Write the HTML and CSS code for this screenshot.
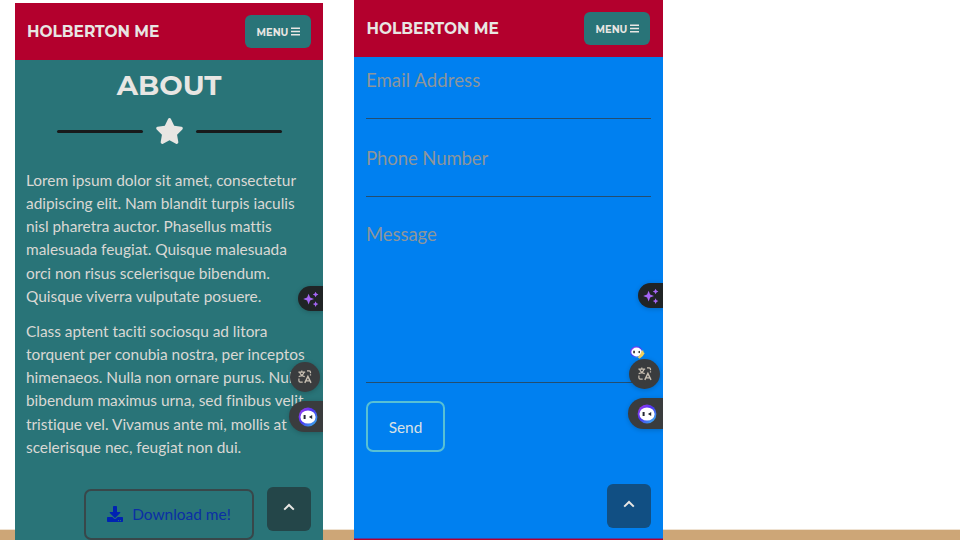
FILE: index.html
```html
<!DOCTYPE html>
<html lang="en">
<head>
<meta charset="utf-8">
<title>Holberton Me</title>
<link rel="stylesheet" href="styles.css">
</head>
<body>
<svg class="defs" width="0" height="0">
  <defs>
    <linearGradient id="ring" x1="0" y1="0" x2="1" y2="1"><stop offset="0" stop-color="#b03cf0"/><stop offset=".45" stop-color="#4b35f4"/><stop offset="1" stop-color="#35c4ea"/></linearGradient>
    <symbol id="sparkles" viewBox="0 0 16 16"><path fill="#a566f5" d="M5.6 2.8 7.1 6.6 11 8.1 7.1 9.6 5.6 13.5 4.1 9.6.2 8.1 4.1 6.6ZM12.6.7l.9 1.9 1.9.9-1.9.9-.9 1.9-.9-1.9-1.9-.9 1.9-.9ZM12.6 10.3l.9 1.9 1.9.9-1.9.9-.9 1.9-.9-1.9-1.9-.9 1.9-.9Z"/></symbol>
    <symbol id="translate" viewBox="0 0 14 14"><g fill="none" stroke="#c9c0b3" stroke-width="1.2"><path d="M.4 2.2h6.8M3.8.5v1.7M1.7 2.4c.6 2.1 2.2 3.5 5 4.3M6 2.4C5.4 4.6 3.7 5.9.7 6.7"/><path d="M9 .8h2.1q1.4 0 1.4 1.4v1M12.5 4.3v1.2M.9 8.5v2.2q0 1.4 1.4 1.4h2.4"/><path stroke-width="1.4" d="M6.8 12.9 9.9 6.4l3.1 6.5M7.8 10.9h4.2"/></g></symbol>
    <symbol id="bot" viewBox="0 0 20 20"><circle cx="10" cy="10" r="9.4" fill="url(#ring)"/><ellipse cx="10" cy="10" rx="7.6" ry="6.6" fill="#fff"/><path fill="#242833" d="M5.600 8.100h2v3.800h-2zM10.900 10l3.300-2v4z"/></symbol>
    <symbol id="bars" viewBox="0 0 9 9"><path fill="none" stroke="#e8e6e3" stroke-width="1.400" d="M0 1.200h9M0 4.500h9M0 7.800h9"/></symbol>
    <symbol id="chevron" viewBox="0 0 12 8"><path fill="none" stroke="#e8e6e3" stroke-width="2" d="M1.200 6.600 6 2l4.800 4.600"/></symbol>
  </defs>
</svg>
<main class="stage">
  <section class="phone about">
    <header class="nav"><span class="brand">HOLBERTON ME</span><button class="menu"><span>MENU</span><svg><use href="#bars"/></svg></button></header>
    <h2 class="title">ABOUT</h2>
    <div class="divider"><i></i><svg viewBox="0 0 576 512"><path fill="#e8e6e3" d="M316.900 18C311.600 7 300.400 0 288.100 0s-23.400 7-28.800 18L195 150.300 51.400 171.500c-12 1.800-22 10.200-25.700 21.700s-.7 24.200 7.900 32.700L137.800 329 113.200 474.700c-2 12 3 24.200 12.900 31.300s23 8 33.800 2.300l128.300-68.500 128.300 68.500c10.800 5.700 23.900 4.900 33.800-2.300s14.900-19.300 12.900-31.300L438.500 329 542.700 225.900c8.600-8.500 11.700-21.200 7.900-32.700s-13.700-19.900-25.700-21.700L381.200 150.300Z"/></svg><i></i></div>
    <div class="copy">
      <p>Lorem ipsum dolor sit amet, consectetur<br>adipiscing elit. Nam blandit turpis iaculis<br>nisl pharetra auctor. Phasellus mattis<br>malesuada feugiat. Quisque malesuada<br>orci non risus scelerisque bibendum.<br>Quisque viverra vulputate posuere.</p>
      <p>Class aptent taciti sociosqu ad litora<br>torquent per conubia nostra, per inceptos<br>himenaeos. Nulla non ornare purus. Nullam<br>bibendum maximus urna, sed finibus velit<br>tristique vel. Vivamus ante mi, mollis at<br>scelerisque nec, feugiat non dui.</p>
    </div>
    <a class="download"><svg viewBox="0 0 512 512"><path fill="#0022b3" d="M216 0h80c13 0 24 11 24 24v168h88c18 0 27 21 14 34L270 378c-8 8-20 8-28 0L90 226c-13-13-4-34 14-34h88V24c0-13 11-24 24-24zm296 376v112c0 13-11 24-24 24H24c-13 0-24-11-24-24V376c0-13 11-24 24-24h147l49 49c20 20 52 20 72 0l49-49h147c13 0 24 11 24 24zM388 464a20 20 0 1 0-40 0 20 20 0 0 0 40 0zm64 0a20 20 0 1 0-40 0 20 20 0 0 0 40 0z"/></svg><span>Download me!</span></a>
    <span class="pill sparkle"><svg><use href="#sparkles"/></svg></span>
    <span class="pill lang"><svg><use href="#translate"/></svg></span>
    <span class="pill chat"><svg><use href="#bot"/></svg></span>
    <button class="top"><svg><use href="#chevron"/></svg></button>
  </section>
  <section class="phone contact">
    <header class="nav"><span class="brand">HOLBERTON ME</span><button class="menu"><span>MENU</span><svg><use href="#bars"/></svg></button></header>
    <form>
      <label class="email">Email Address</label>
      <label class="tel">Phone Number</label>
      <label class="message">Message</label>
      <button class="send" type="button">Send</button>
    </form>
    <div class="next"></div>
    <span class="pill sparkle"><svg><use href="#sparkles"/></svg></span>
    <span class="wave"><svg viewBox="0 0 15 14"><ellipse cx="6.600" cy="6" rx="6.400" ry="5.800" fill="url(#ring)"/><ellipse cx="6.600" cy="6" rx="5.300" ry="4.400" fill="#fff"/><path fill="#333" d="M3.200 4.800h1.700v2.400H3.200zM7.600 6 10 4.700v2.600z"/><path fill="#f2cf5b" d="m11.800 5 1.400-.8.4 2.200 1.100.5-1.800 3.200-3.400 2.700-1.700-1.500 2.400-2.800z"/></svg></span>
    <span class="pill lang"><svg><use href="#translate"/></svg></span>
    <span class="pill chat"><svg><use href="#bot"/></svg></span>
    <button class="top"><svg><use href="#chevron"/></svg></button>
  </section>
</main>
</body>
</html>
```
FILE: styles.css
```css
* { box-sizing: border-box; }
body { margin: 0; width: 960px; height: 540px; overflow: hidden; font-family: Lato, sans-serif; background: linear-gradient(#fff 529px, #efe2d2 529px, #efe2d2 530px, #cda677 530px); }
.defs { position: absolute; }
button { border: 0; padding: 0; font: inherit; }
svg { display: block; flex: none; }
.stage { display: flex; height: 540px; }
.phone { position: relative; overflow: hidden; color: #d9d8d4; }
.about { width: 308px; height: 537px; margin: 3px 31px 0 15px; background: #297478; }
.contact { width: 309px; height: 540px; background: #0080f0; display: flex; flex-direction: column; }
.nav { height: 57px; flex: none; background: #b3002d; display: flex; justify-content: space-between; align-items: center; padding: 0 12px; }
.contact .nav { padding-right: 13px; }
.brand { font: 700 15.430px/20px Montserrat, Inter, sans-serif; color: #e8e6e3; white-space: nowrap; }
.contact .brand { padding-left: .5px; }
.menu { width: 66px; height: 33px; border-radius: 6px; background: #297478; color: #e8e6e3; display: flex; align-items: center; justify-content: center; gap: 3px; padding-left: 1px; font: 700 9.900px/14px Montserrat, Inter, sans-serif; }
.menu svg { width: 9px; height: 9px; }
.title { margin: 9px 0 0; text-align: center; color: #e8e6e3; font: 700 27.800px/32px Montserrat, Inter, sans-serif; }
.divider { display: flex; align-items: center; justify-content: center; gap: 12px; height: 28px; margin-top: 16px; }
.divider i { width: 86px; height: 3px; border-radius: 2px; background: #181a1b; }
.divider svg { width: 29px; height: 26px; }
.copy { padding: 24px 0 0 11px; font-size: 15.430px; line-height: 23.150px; letter-spacing: -.02px; white-space: nowrap; }
.copy p { margin: 0 0 12px; }
.download { margin: 30px 0 0 69px; width: 170px; height: 51px; border: 2px solid #38474a; border-radius: 7px; display: flex; align-items: center; justify-content: center; gap: 9px; color: #0b2fa5; font-size: 15.430px; white-space: nowrap; }
.download svg { width: 16px; height: 16px; }
form { padding: 0 12px; height: 481px; display: flex; flex-direction: column; align-items: stretch; }
label { color: #8d969a; font-size: 18.500px; line-height: 24px; letter-spacing: -.07px; border-bottom: 1px solid #244e70; }
.email { height: 62px; padding-top: 11px; letter-spacing: .1px; }
.tel { height: 78px; padding-top: 27px; }
.message { height: 186px; padding-top: 25px; }
.send { width: 79px; height: 51px; margin-top: 18px; align-self: flex-start; border: 2px solid #58c0d4; border-radius: 7px; background: transparent; color: #d9e0e5; font-size: 15.430px; }
.next { height: 2px; background: linear-gradient(#5041a0 1px, #b3002d 1px); }
.pill { position: absolute; right: 0; display: flex; align-items: center; background: #3a3c3e; box-shadow: 0 1px 5px rgb(0 0 0 / 20%); }
.sparkle { top: 283px; width: 25px; height: 25px; padding-left: 5px; border-radius: 13px 0 0 13px; background: #202426; }
.sparkle svg { width: 16px; height: 16px; }
.lang { top: 359px; right: 3px; width: 31px; height: 30px; border-radius: 50%; justify-content: center; }
.lang svg { width: 14px; height: 14px; }
.about .lang { width: 30px; }
.chat { top: 398px; width: 35px; height: 31px; padding-left: 9px; border-radius: 16px 0 0 16px; }
.chat svg { width: 20px; height: 20px; }
.about .chat { width: 34px; }
.wave { position: absolute; left: 276px; top: 346px; }
.wave svg { width: 15px; height: 14px; }
.top { position: absolute; right: 12px; top: 484px; width: 44px; height: 44px; border-radius: 6px; display: flex; justify-content: center; padding-top: 16px; background: #244649; }
.contact .top { background: #114f83; right: 12.500px; }
.top svg { width: 12px; height: 8px; }
```
